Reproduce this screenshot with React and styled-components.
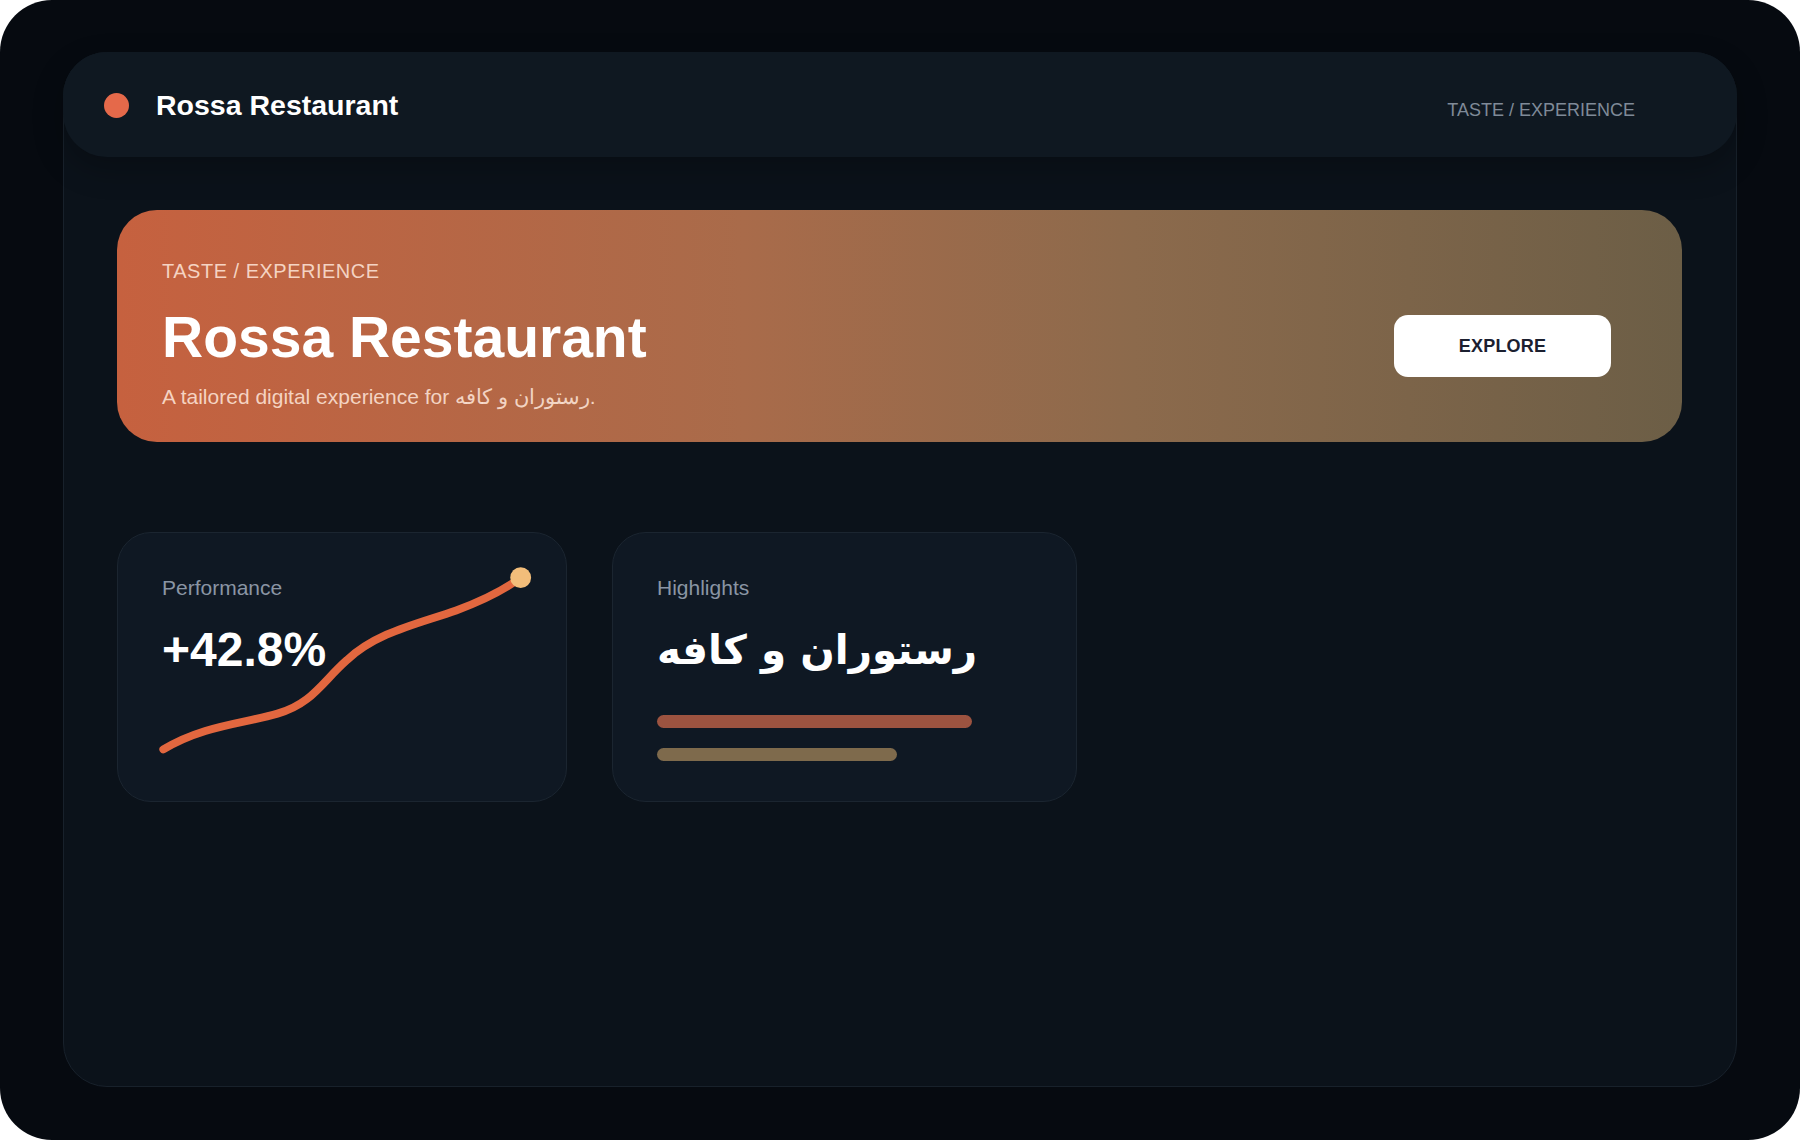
import styled, { createGlobalStyle } from 'styled-components'

const GlobalStyle = createGlobalStyle`
  html, body {
    margin: 0;
    padding: 0;
    background: #ffffff;
  }
  body {
    font-family: "Liberation Sans", Arial, sans-serif;
  }
  * {
    box-sizing: border-box;
  }
`

const Frame = styled.div`
  width: 1800px;
  height: 1140px;
  background: #060a10;
  border-radius: 52px;
  padding: 52px 63px 53px;
`

const Panel = styled.main`
  height: 100%;
  background: #0b121a;
  border: 1px solid #18212b;
  border-radius: 44px;
  display: flex;
  flex-direction: column;
`

const Header = styled.header`
  height: 105px;
  margin: -1px -1px 0;
  background: #0f1821;
  border-radius: 44px;
  box-shadow: 0 12px 30px rgba(0, 0, 0, 0.25);
  display: flex;
  align-items: center;
  padding: 2px 102px 0 41px;
`

const Dot = styled.span`
  width: 25px;
  height: 25px;
  border-radius: 50%;
  background: #e5694a;
  flex-shrink: 0;
`

const Brand = styled.h1`
  margin: 0 0 0 27px;
  font-size: 28.5px;
  font-weight: 700;
  color: #ffffff;
  line-height: 1;
`

const Crumb = styled.span`
  margin-left: auto;
  margin-top: 9px;
  font-size: 18px;
  color: #7f8a98;
`

const Content = styled.div`
  padding: 53px 54px 0 53px;
  display: flex;
  flex-direction: column;
`

const Hero = styled.section`
  height: 232px;
  border-radius: 40px;
  background: linear-gradient(90deg, #c6613f 0%, #a96b4a 40%, #8c6a4c 65%, #6c5e46 100%);
  display: flex;
  align-items: flex-start;
  padding: 48px 71px 0 45px;
`

const HeroText = styled.div`
  display: flex;
  flex-direction: column;
`

const Eyebrow = styled.span`
  font-size: 20px;
  line-height: 26px;
  letter-spacing: 0.5px;
  color: rgba(255, 232, 220, 0.85);
`

const HeroTitle = styled.h2`
  margin: 20px 0 0;
  font-size: 57px;
  line-height: 66px;
  font-weight: 700;
  color: #ffffff;
`

const Subtitle = styled.p`
  margin: 13px 0 0;
  font-size: 21px;
  line-height: 28px;
  color: rgba(255, 232, 220, 0.85);
`

const ExploreButton = styled.button`
  margin: 57px 0 0 auto;
  width: 217px;
  height: 62px;
  border: none;
  border-radius: 14px;
  background: #ffffff;
  color: #1b2030;
  font-family: "Liberation Sans", Arial, sans-serif;
  font-size: 18px;
  font-weight: 700;
  letter-spacing: 0.2px;
  cursor: pointer;
`

const CardRow = styled.div`
  margin-top: 90px;
  display: flex;
  gap: 45px;
`

const Card = styled.div`
  position: relative;
  width: ${props => props.width}px;
  height: 270px;
  background: #0f1823;
  border: 1px solid #1b2530;
  border-radius: 34px;
  padding: 43px 44px 0 44px;
  display: flex;
  flex-direction: column;
`

const CardLabel = styled.span`
  font-size: 21px;
  line-height: 24px;
  color: #8a95a4;
`

const BigNumber = styled.div`
  margin-top: 26px;
  font-size: 48px;
  line-height: 48px;
  font-weight: 700;
  color: #ffffff;
`

const Chart = styled.svg`
  position: absolute;
  inset: 0;
  width: 100%;
  height: 100%;
  pointer-events: none;
`

const PersianTitle = styled.div`
  margin-top: 22px;
  font-family: "DejaVu Sans", "Noto Sans", sans-serif;
  font-size: 40.5px;
  line-height: 56px;
  font-weight: 700;
  color: #ffffff;
`

const Bars = styled.div`
  margin-top: 37px;
  display: flex;
  flex-direction: column;
  gap: 20px;
`

const Bar = styled.div`
  height: 13px;
  border-radius: 7px;
  background: ${props => props.color};
`

const bars = [
  { width: 315, color: '#9c5340' },
  { width: 240, color: '#7e6a4c' }
]

const App = () => {
  return (
    <>
      <GlobalStyle />
      <Frame>
        <Panel>
          <Header>
            <Dot />
            <Brand>Rossa Restaurant</Brand>
            <Crumb>TASTE / EXPERIENCE</Crumb>
          </Header>
          <Content>
            <Hero>
              <HeroText>
                <Eyebrow>TASTE / EXPERIENCE</Eyebrow>
                <HeroTitle>Rossa Restaurant</HeroTitle>
                <Subtitle>A tailored digital experience for رستوران و کافه.</Subtitle>
              </HeroText>
              <ExploreButton>EXPLORE</ExploreButton>
            </Hero>
            <CardRow>
              <Card width={450}>
                <CardLabel>Performance</CardLabel>
                <BigNumber>+42.8%</BigNumber>
                <Chart viewBox="0 0 450 270">
                  <path
                    d="M45 218 C 85 194, 125 192, 160 182 C 195 172, 205 150, 230 128 C 260 100, 300 92, 340 78 C 370 67, 390 56, 405 45"
                    fill="none"
                    stroke="#e2673f"
                    strokeWidth="8"
                    strokeLinecap="round"
                  />
                  <circle cx="405" cy="45" r="10.5" fill="#f2bd7a" />
                </Chart>
              </Card>
              <Card width={465}>
                <CardLabel>Highlights</CardLabel>
                <PersianTitle>رستوران و کافه</PersianTitle>
                <Bars>
                  {bars.map((bar, i) => (
                    <Bar key={i} color={bar.color} style={{ width: bar.width }} />
                  ))}
                </Bars>
              </Card>
            </CardRow>
          </Content>
        </Panel>
      </Frame>
    </>
  )
}

export default App
